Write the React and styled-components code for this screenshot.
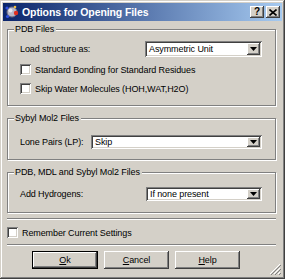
import React from 'react';
import styled, { createGlobalStyle } from 'styled-components';

const GlobalStyle = createGlobalStyle`
  html, body {
    margin: 0;
    padding: 0;
    background: #d4d0c8;
  }
  * {
    box-sizing: border-box;
  }
`;

const FONT = `"Liberation Sans", Arial, sans-serif`;

const Window = styled.div`
  position: relative;
  width: 285px;
  height: 279px;
  padding: 3px;
  background: #d4d0c8;
  font-family: ${FONT};
  font-size: 9px;
  letter-spacing: -0.1px;
  color: #000;
  box-shadow: inset -1px -1px #404040, inset 1px 1px #d4d0c8,
    inset -2px -2px #808080, inset 2px 2px #fff;
`;

const TitleBar = styled.div`
  display: flex;
  align-items: center;
  height: 18px;
  padding: 0 2px 0 1px;
  gap: 2px;
  background: linear-gradient(to right, #0a246a, #a6caf0);
`;

const Title = styled.span`
  flex: 1;
  color: #fff;
  font-weight: bold;
  font-size: 10.5px;
  letter-spacing: -0.1px;
  white-space: nowrap;
`;

const TitleButton = styled.div`
  width: 14px;
  height: 12px;
  display: flex;
  align-items: center;
  justify-content: center;
  background: #d4d0c8;
  font-weight: bold;
  font-size: 10px;
  line-height: 1;
  box-shadow: inset -1px -1px #404040, inset 1px 1px #fff,
    inset -2px -2px #808080;
`;

const Body = styled.div`
  display: flex;
  flex-direction: column;
  padding: 0 5px 0 4px;
`;

const Group = styled.div`
  position: relative;
  display: flex;
  flex-direction: column;
  gap: ${p => p.gap || 0}px;
  margin-top: ${p => p.top}px;
  padding: ${p => p.pt}px 13px ${p => p.pb}px 12px;
  border: 1px solid #808080;
  box-shadow: 1px 1px 0 #fff, inset 1px 1px 0 #fff;
  margin-right: 1px;
`;

const Legend = styled.span`
  position: absolute;
  top: -7px;
  left: 6px;
  padding: 0 2px 0 1px;
  background: #d4d0c8;
  line-height: 13px;
  white-space: nowrap;
`;

const Row = styled.div`
  display: flex;
  align-items: center;
  min-height: 13px;
`;

const Label = styled.span`
  width: ${p => p.width}px;
  flex-shrink: 0;
  white-space: nowrap;
`;

const Select = styled.div`
  flex: 1;
  display: flex;
  align-items: stretch;
  height: ${p => p.h}px;
  padding: 2px;
  background: #fff;
  box-shadow: inset 1px 1px #808080, inset -1px -1px #fff,
    inset 2px 2px #404040, inset -2px -2px #d4d0c8;
`;

const SelectValue = styled.span`
  flex: 1;
  display: flex;
  align-items: center;
  padding-left: 2px;
  white-space: nowrap;
`;

const DropButton = styled.span`
  width: 13px;
  display: flex;
  align-items: center;
  justify-content: center;
  background: #d4d0c8;
  box-shadow: inset -1px -1px #404040, inset 1px 1px #fff,
    inset -2px -2px #808080;
`;

const Check = styled.span`
  width: 11px;
  height: 11px;
  flex-shrink: 0;
  margin-right: 4px;
  background: #fff;
  box-shadow: inset 1px 1px #808080, inset -1px -1px #fff,
    inset 2px 2px #404040, inset -2px -2px #d4d0c8;
`;

const Separator = styled.div`
  height: 2px;
  margin-top: ${p => p.top}px;
  margin-right: 1px;
  border-top: 1px solid #808080;
  border-bottom: 1px solid #fff;
`;

const CheckRow = styled(Row)`
  margin-top: ${p => p.top}px;
  height: 13px;
`;

const ButtonRow = styled.div`
  display: flex;
  gap: 6px;
  margin-top: 5px;
  padding-left: 25px;
`;

const Button = styled.div`
  width: ${p => p.width}px;
  height: 18px;
  display: flex;
  align-items: center;
  justify-content: center;
  background: #d4d0c8;
  box-shadow: ${p =>
    p.primary
      ? 'inset 0 0 0 1px #000, inset -2px -2px #404040, inset 2px 2px #fff, inset -3px -3px #808080'
      : 'inset -1px -1px #404040, inset 1px 1px #fff, inset -2px -2px #808080, inset 2px 2px #d4d0c8'};
  u {
    text-decoration: underline;
  }
`;

const Grip = styled.svg`
  position: absolute;
  right: 4px;
  bottom: 4px;
`;

const Arrow = () => (
  <svg width="7" height="4" viewBox="0 0 7 4">
    <path d="M0 0h7L3.5 4z" fill="#000" />
  </svg>
);

const AppIcon = () => (
  <svg width="16" height="16" viewBox="0 0 16 16">
    <circle cx="8" cy="8" r="5" fill="#b8b8c8" stroke="#6a6a80" strokeWidth="1" />
    <circle cx="6.5" cy="6.5" r="2" fill="#e8e8f0" />
    <circle cx="12" cy="9" r="2.2" fill="#e03020" />
    <circle cx="3" cy="4" r="1.6" fill="#3050e0" />
    <circle cx="3.5" cy="12.5" r="1.6" fill="#3050e0" />
    <circle cx="11" cy="3" r="1.3" fill="#f0c040" />
  </svg>
);

const Combo = ({ value, h }) => (
  <Select h={h}>
    <SelectValue>{value}</SelectValue>
    <DropButton>
      <Arrow />
    </DropButton>
  </Select>
);

export default function App() {
  return (
    <>
      <GlobalStyle />
      <Window>
        <TitleBar>
          <AppIcon />
          <Title>Options for Opening Files</Title>
          <TitleButton>?</TitleButton>
          <TitleButton>
            <svg width="8" height="7" viewBox="0 0 8 7">
              <path d="M0.5 0.5L7.5 6.5M7.5 0.5L0.5 6.5" stroke="#000" strokeWidth="1.6" />
            </svg>
          </TitleButton>
        </TitleBar>
        <Body>
          <Group top={8} pt={11} pb={10} gap={6}>
            <Legend>PDB Files</Legend>
            <Row>
              <Label width={125}>Load structure as:</Label>
              <Combo value="Asymmetric Unit" h={16} />
            </Row>
            <Row>
              <Check />
              <span>Standard Bonding for Standard Residues</span>
            </Row>
            <Row>
              <Check />
              <span>Skip Water Molecules (HOH,WAT,H2O)</span>
            </Row>
          </Group>
          <Group top={12} pt={16} pb={10}>
            <Legend>Sybyl Mol2 Files</Legend>
            <Row>
              <Label width={71}>Lone Pairs (LP):</Label>
              <Combo value="Skip" h={14} />
            </Row>
          </Group>
          <Group top={12} pt={14} pb={11}>
            <Legend>PDB, MDL and Sybyl Mol2 Files</Legend>
            <Row>
              <Label width={126}>Add Hydrogens:</Label>
              <Combo value="If none present" h={14} />
            </Row>
          </Group>
          <Separator top={5} />
          <CheckRow top={6}>
            <Check />
            <span>Remember Current Settings</span>
          </CheckRow>
          <Separator top={5} />
          <ButtonRow>
            <Button width={66} primary>
              <span><u>O</u>k</span>
            </Button>
            <Button width={65}>
              <span><u>C</u>ancel</span>
            </Button>
            <Button width={65}>
              <span><u>H</u>elp</span>
            </Button>
          </ButtonRow>
        </Body>
        <Grip width="12" height="12" viewBox="0 0 12 12">
          <path d="M11 1L1 11M11 5L5 11M11 9L9 11" stroke="#fff" strokeWidth="1" />
          <path d="M12 2L2 12M12 6L6 12M12 10L10 12" stroke="#808080" strokeWidth="1" />
        </Grip>
      </Window>
    </>
  );
}
